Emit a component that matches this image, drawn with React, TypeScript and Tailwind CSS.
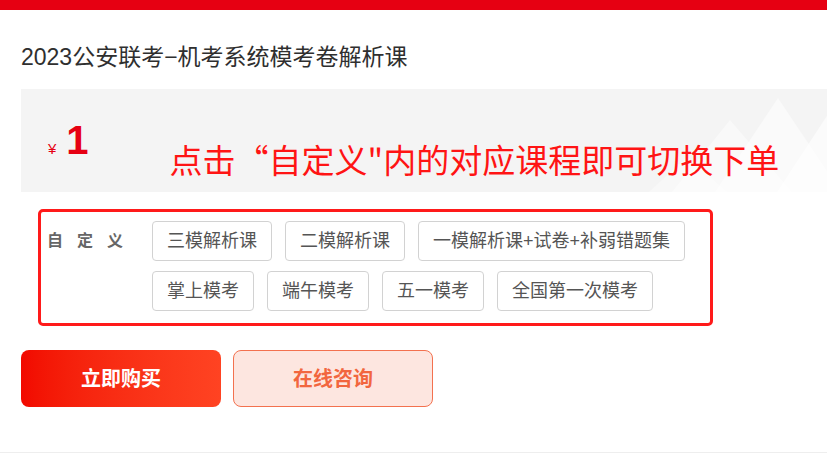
import React from 'react';

const options: string[][] = [
    ['三模解析课', '二模解析课', '一模解析课+试卷+补弱错题集'],
    ['掌上模考', '端午模考', '五一模考', '全国第一次模考'],
];

const Peaks: React.FC = () => (
    <svg
        className="absolute right-0 top-0 h-full"
        width="200"
        height="103"
        viewBox="0 0 200 103"
        aria-hidden
    >
        <polygon points="60,68 22,103 100,103" fill="#ffffff" opacity="0.35" />
        <polygon points="103,31 45,103 165,103" fill="#ffffff" opacity="0.45" />
        <polygon points="151,9 88,103 214,103" fill="#ffffff" opacity="0.5" />
        <polygon points="215,4 150,103 280,103" fill="#ffffff" opacity="0.6" />
    </svg>
);

export default function App() {
    return (
        <div className="w-[827px] h-[465px] overflow-hidden bg-white font-['Liberation_Sans','Noto_Sans_CJK_SC',sans-serif]">
            <div className="h-[10px] bg-[#e60012]" />

            <div className="pl-[21px]">
                <h1 className="pt-[32px] text-[23px] leading-[30px] text-[#2f2f2f]">
                    2023公安联考−机考系统模考卷解析课
                </h1>

                {/* price strip */}
                <div className="relative mt-[17px] flex h-[103px] bg-[#f4f4f4] pl-[27px]">
                    <Peaks />
                    <div className="relative flex items-baseline pt-[31px] text-[#e60012]">
                        <span className="text-[15px] leading-none">¥</span>
                        <span className="ml-[10px] text-[40px] font-bold leading-none">1</span>
                    </div>
                    <p className="relative ml-[81px] pt-[54px] text-[33px] leading-none text-[#ff1414] font-['Noto_Sans_CJK_SC',sans-serif]">
                        点击“自定义"内的对应课程即可切换下单
                    </p>
                </div>

                {/* options */}
                <div className="mt-[17px] ml-[17px] flex w-[675px] rounded-[5px] border-[3px] border-[#ff1a1a] pb-[12px] pl-[6px] pt-[9px]">
                    <div className="flex h-10 w-[105px] shrink-0 items-center text-[16px] font-bold tracking-[14px] text-[#666]">
                        自定义
                    </div>
                    <div className="flex flex-col gap-[10px]">
                        {options.map((row, i) => (
                            <div key={i} className="flex gap-[13px]">
                                {row.map((o) => (
                                    <button
                                        key={o}
                                        className="h-10 rounded-[4px] border border-[#d2d2d2] bg-white px-[14px] text-[18px] text-[#555]"
                                    >
                                        {o}
                                    </button>
                                ))}
                            </div>
                        ))}
                    </div>
                </div>

                {/* actions */}
                <div className="mt-[24px] flex gap-[12px]">
                    <button className="h-[57px] w-[200px] rounded-[8px] bg-gradient-to-r from-[#f20800] to-[#ff4322] text-[20px] font-bold text-white">
                        立即购买
                    </button>
                    <button className="h-[57px] w-[200px] rounded-[8px] border border-[#f3714f] bg-[#fde6e0] text-[20px] font-bold text-[#f2663f]">
                        在线咨询
                    </button>
                </div>
            </div>

            <div className="mt-[45px] border-t border-[#eeeeee]" />
        </div>
    );
}
